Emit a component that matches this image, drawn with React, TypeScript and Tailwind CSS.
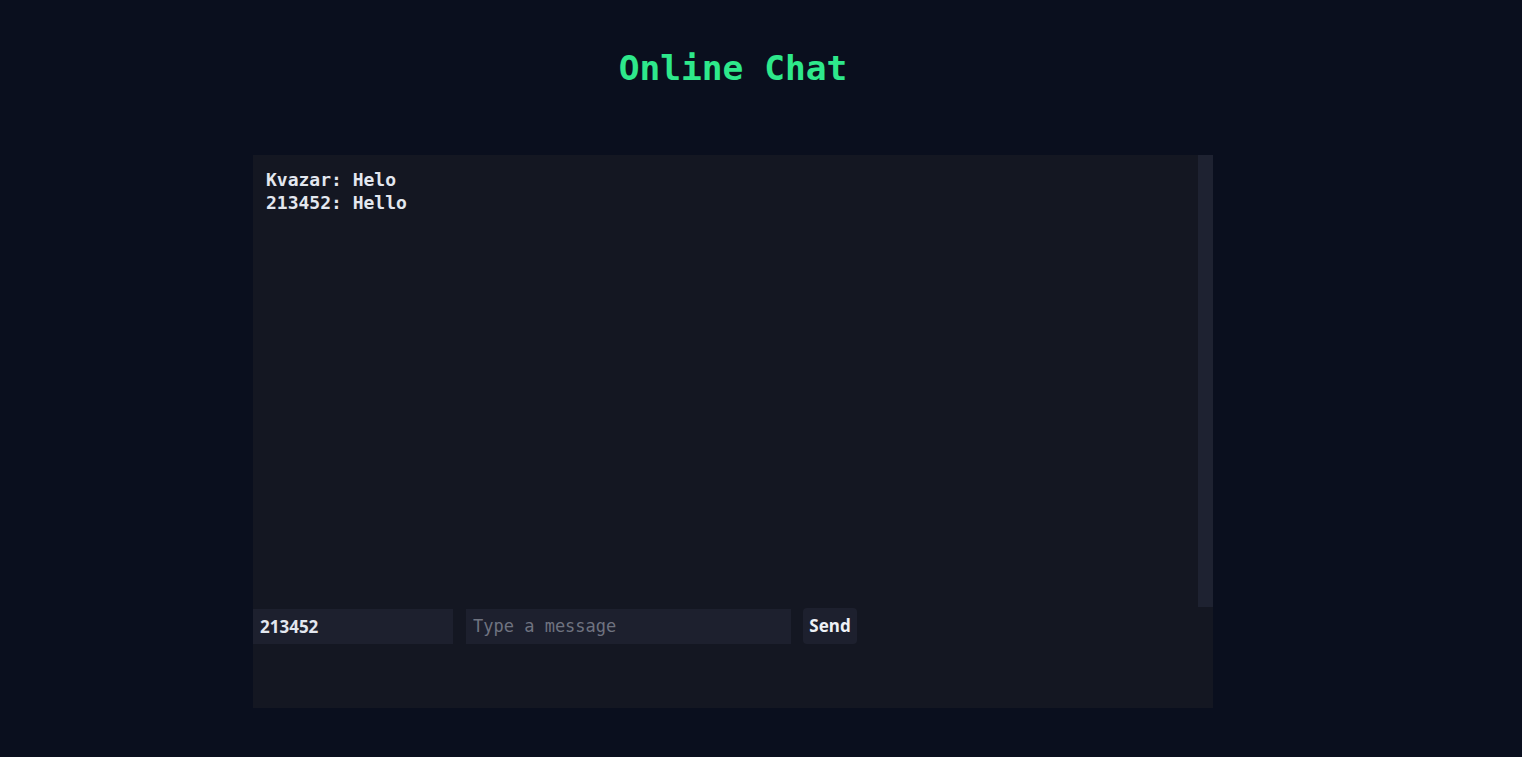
import React from "react";

export default function App() {
  return (
    <div className="min-h-screen w-full bg-[#0a0f1e] flex flex-col items-center pr-[56px]">
      <h1 className="mt-[48px] h-[40px] leading-[40px] text-[34.5px] font-bold text-[#2ee88b] font-['DejaVu_Sans_Mono',monospace]">
        Online Chat
      </h1>
      <div className="mt-[67px] w-[960px] h-[553px] bg-[#141722] flex flex-col">
        <div className="flex h-[452px]">
          <div className="flex-1 px-[13px] pt-[13px] text-[18px] leading-[23px] font-bold text-[#e3e7ef] font-['DejaVu_Sans_Mono',monospace]">
            <div>Kvazar: Helo</div>
            <div>213452: Hello</div>
          </div>
          <div className="w-[15px] bg-[#1e2231]" />
        </div>
        <div className="flex items-center mt-[1px] h-[36px]">
          <input
            defaultValue="213452"
            className="w-[200px] h-[35px] bg-[#1d202e] px-[7px] text-[17px] font-bold text-[#e3e7ef] font-['Noto_Sans',sans-serif] outline-none"
          />
          <input
            placeholder="Type a message"
            className="ml-[13px] w-[325px] h-[35px] bg-[#1d202e] px-[7px] text-[17px] text-[#e3e7ef] placeholder:text-[#6f7380] font-['DejaVu_Sans_Mono',monospace] outline-none"
          />
          <button className="ml-[12px] w-[54px] h-[36px] rounded-[4px] bg-[#1d202e] text-[17px] font-bold text-[#eef1f6] font-['Noto_Sans',sans-serif]">
            Send
          </button>
        </div>
      </div>
    </div>
  );
}
